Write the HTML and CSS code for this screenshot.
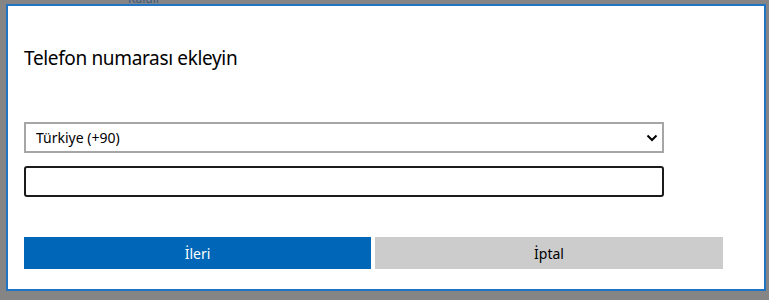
FILE: index.html
```html
<!DOCTYPE html>
<html lang="tr">
<head>
<meta charset="utf-8">
<title>Telefon numarası ekleyin</title>
<link rel="stylesheet" href="styles.css">
</head>
<body>
<div class="backdrop-text">Kaldır</div>
<div class="dialog">
  <h1 class="title">Telefon numarası ekleyin</h1>
  <div class="fields">
    <div class="select-wrap">
      <select class="country">
        <option>Türkiye (+90)</option>
      </select>
      <svg class="chevron" width="12" height="8" viewBox="0 0 12 8"><path d="M1.5 1.5 L6 6 L10.5 1.5" fill="none" stroke="#000" stroke-width="2"/></svg>
    </div>
    <input class="phone" type="text">
  </div>
  <div class="actions">
    <button class="btn primary">İleri</button>
    <button class="btn secondary">İptal</button>
  </div>
</div>
</body>
</html>
```

FILE: styles.css
```css
html, body {
  margin: 0;
  padding: 0;
}
body {
  background: #858585;
  width: 769px;
  height: 300px;
  overflow: hidden;
  position: relative;
  font-family: "Noto Sans", "Open Sans", sans-serif;
}
.backdrop-text {
  position: absolute;
  left: 128px;
  top: -8px;
  font-size: 12px;
  line-height: 14px;
  color: #3d5a80;
}
.dialog {
  position: relative;
  margin: 4px 0 0 6px;
  height: 283px;
  width: 724px;
  border: 2px solid #1f74c4;
  background: #fff;
  padding: 0 16px;
  box-sizing: content-box;
  display: flex;
  flex-direction: column;
}
.title {
  margin: 39px 0 0 0;
  font-size: 19px;
  font-weight: 400;
  line-height: 26px;
  color: #000;
  letter-spacing: -0.35px;
}
.fields {
  margin-top: 51px;
  width: 640px;
  display: flex;
  flex-direction: column;
  gap: 13px;
}
.select-wrap {
  position: relative;
}
.country {
  appearance: none;
  -webkit-appearance: none;
  box-sizing: border-box;
  width: 640px;
  height: 31px;
  border: 2px solid #a6a6a6;
  background: #fff;
  font-family: inherit;
  font-size: 14px;
  color: #000;
  padding: 0 0 0 10px;
  margin: 0;
  border-radius: 0;
  display: block;
}
.chevron {
  position: absolute;
  right: 6px;
  top: 12px;
}
.phone {
  width: 640px;
  height: 31px;
  box-sizing: border-box;
  border: 2px solid #1b1b1b;
  border-radius: 3px;
  margin: 0;
  padding: 0 8px;
  display: block;
  font-family: inherit;
  font-size: 14px;
}
.actions {
  margin-top: 40px;
  display: flex;
  gap: 4px;
}
.btn {
  height: 32px;
  border: 0;
  margin: 0;
  font-family: inherit;
  font-size: 14px;
  padding: 0;
}
.primary {
  width: 347px;
  background: #0067b8;
  color: #fff;
}
.secondary {
  width: 348px;
  background: #cccccc;
  color: #000;
}
```
